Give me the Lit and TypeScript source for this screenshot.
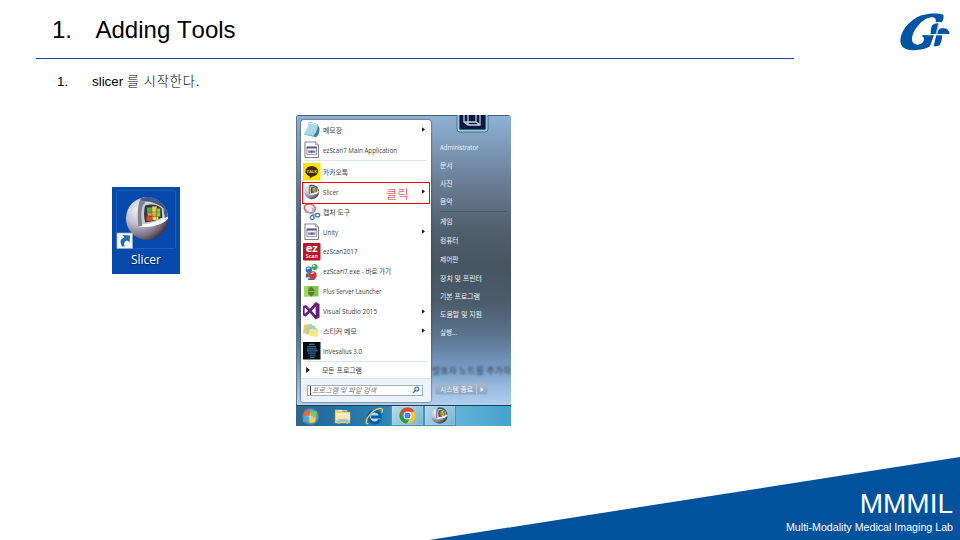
import { LitElement, html, svg, css, nothing } from "lit";
import { customElement } from "lit/decorators.js";

const sphere = (id: string) => svg`
  <defs>
    <radialGradient id="b${id}" cx=".3" cy=".3" r=".82">
      <stop offset="0" stop-color="#f3f2f8"/><stop offset=".4" stop-color="#c3c1d0"/>
      <stop offset=".75" stop-color="#77707f"/><stop offset="1" stop-color="#30262e"/>
    </radialGradient>
    <linearGradient id="r${id}" x1="0" y1="0" x2="0" y2="1">
      <stop offset="0" stop-color="#cfd2dc"/><stop offset="1" stop-color="#ffffff"/>
    </linearGradient>
  </defs>
  <circle cx="22" cy="22" r="21.5" fill="url(#b${id})"/>
  <path d="M15 2C29 -3 43 8 43.5 22C39 28 26 32 13 30C11 19 11 9 15 2Z" fill="url(#r${id})"/>
  <path d="M15 2C29 -3 42 6 43.3 20L40 21.5C40 12 32 4 17 5Z" fill="#41598d"/>
  <path d="M15 2Q11 14 13 30L17 29.5Q16 13 20 6Z" fill="#7d848e"/>
  <path d="M18 8Q30 4 39 12L39 21Q30 27 17 28Q15 16 18 8Z" fill="#c9ccd2"/>
  <path d="M20 9Q30 6 37 12L37.500 21Q30 25 20 26Q18 17 20 9Z" fill="#30373b"/>
  <path d="M22 11h6v7h-6z" fill="#56a96a"/><path d="M27 10h5v8h-5z" fill="#f4d33c"/>
  <path d="M23 17h8v4h-8z" fill="#f09a2c"/><path d="M21.500 19h6v5.500h-6z" fill="#d84c32"/>
  <path d="M31 12h4.500v8.500h-4.500z" fill="#a4bf50"/><path d="M27.500 20h6v3.500h-6z" fill="#f2df58"/>
  <path d="M27 10v14M31.500 11v12M21.500 15.500h14M21.500 20h14" stroke="#4a4a30" stroke-width=".45"/>`;

const appWindow = svg`
  <path d="M2 1h11l3 3v13H2z" fill="#fff" stroke="#777c84"/>
  <path d="M13 1v3h3" fill="#ddd" stroke="#777c84" stroke-width=".7"/>
  <path d="M4 6h10v8H4z" fill="#f5f6fa" stroke="#777" stroke-width=".8"/>
  <path d="M4 6h10v1.6H4z" fill="#55627e"/>
  <path d="M5.3 9.8h2.5v2.4H5.3z" fill="#d54"/><path d="M7.8 9.8h2.4v2.4H7.8z" fill="#2f4cc8"/><path d="M10.2 9.8h2.5v2.4h-2.5z" fill="#638cce"/>`;

const icons: Record<string, unknown> = {
  notepad: svg`<path d="M6 1L15 3Q18 10 16 14L13 17L1 14Q5 10 6 1Z" fill="#6fb4cc"/>
    <path d="M6 1L15 3Q15 10 11 15L1 13Q5 8 6 1Z" fill="#a8d8e5"/>
    <path d="M11 15Q16 10 15 3L17 8Q17 13 13 17Z" fill="#437f9a"/><path d="M5 2l10 2" stroke="#e9f4f6"/>`,
  app: appWindow,
  talk: svg`<path d="M0 0h18v18H0z" fill="#ffe400"/><ellipse cx="9" cy="8.5" rx="6.6" ry="5.4" fill="#3d2c1d"/>
    <path d="M7 12l0 4 4-3z" fill="#3d2c1d"/><text x="9" y="10.2" text-anchor="middle" font-size="4.3" font-weight="700" fill="#f2d800">TALK</text>`,
  slicer: svg`<g transform="translate(1.3 1.5) scale(.35)">${sphere("m")}</g>`,
  snip: svg`<ellipse cx="7" cy="5.5" rx="5.8" ry="4.4" fill="#f8e9ec" stroke="#d25563" stroke-width="1.4" transform="rotate(15 7 5.5)"/>
    <path d="M2 9l11 3M10 5l1 8" stroke="#a5afba" stroke-width="1.7"/>
    <ellipse cx="9.5" cy="15" rx="1.8" ry="2.2" fill="none" stroke="#3e7db3" stroke-width="1.3"/>
    <ellipse cx="15" cy="12.5" rx="2.2" ry="1.8" fill="none" stroke="#3e7db3" stroke-width="1.3"/>`,
  ez: svg`<rect width="18" height="18" rx="1" fill="#bb1728"/><text x="9" y="9" text-anchor="middle" font-size="11.5" font-weight="700" fill="#fff">ez</text>
    <text x="9" y="15.4" text-anchor="middle" font-size="5.5" font-weight="600" fill="#fff">Scan</text>`,
  setup: svg`<circle cx="12" cy="4" r="3.1" fill="#35aa61"/><circle cx="6" cy="7" r="3.3" fill="#3470ad"/>
    <circle cx="10" cy="12.5" r="4" fill="#dd3038"/><path d="M10 2.5l2 1M4 6l3-1M8 11l3-1" stroke="#ecf3f5" stroke-width="1.3"/>
    <path d="M3 11l3-1v5H3zM5 16h7v1.5H5z" fill="#526577"/>`,
  plus: svg`<path d="M1 4h15v11H1z" fill="#86c345"/><path d="M1 4h4v11H1z" fill="#a8d66e"/>
    <path d="M5.5 8l3-3.5 3 3.5v4l-3 3.2-3-3.2z" fill="#5b7a35"/><path d="M5.5 9.8h6" stroke="#96b84e" stroke-width="1"/>`,
  vs: svg`<path fill-rule="evenodd" d="M0 4l3-1 4 4 6-7 4 2v14l-4 2-6-7-4 4-3-1zM1.7 5.6v6.6L5.4 9zM9 9l4 4.5V4.5z" fill="#68217a"/>`,
  sticky: svg`<path d="M1 3l8-1 2 9-8 2z" fill="#b3d989"/><path d="M1 3l4-1-1 9-4 1z" fill="#f1c67d"/>
    <path d="M4 7l7-4 5 6-6 5z" fill="#a2cae3"/><path d="M7 7l9 1-1 8-9-2z" fill="#f4ea87"/>`,
  head: svg`<path d="M0 0h18v18H0z" fill="#080c14"/>
    <path d="M6 2.5h6M4.5 4.8h9M4 7h10M4 9.2h11M5 11.4h8M7 13.6h6M7 15.8h5" stroke="#386f9b" stroke-width="1.2"/>`,
};
const icon = (name: string) => html`<svg class="icon" viewBox="0 0 18 18">${icons[name]}</svg>`;

type Item = { icon: string; label: string; w: number; more?: boolean; rule?: boolean };
const programs: Item[] = [
  { icon: "notepad", label: "메모장", w: 19, more: true },
  { icon: "app", label: "ezScan7 Main Application", w: 74, rule: true },
  { icon: "talk", label: "카카오톡", w: 25 },
  { icon: "slicer", label: "Slicer", w: 15.5, more: true },
  { icon: "snip", label: "캡처 도구", w: 27 },
  { icon: "app", label: "Unity", w: 15, more: true },
  { icon: "ez", label: "ezScan2017", w: 34.5 },
  { icon: "setup", label: "ezScan7.exe - 바로 가기", w: 68 },
  { icon: "plus", label: "Plus Server Launcher", w: 58.5 },
  { icon: "vs", label: "Visual Studio 2015", w: 54, more: true },
  { icon: "sticky", label: "스티커 메모", w: 34, more: true },
  { icon: "head", label: "InVesalius 3.0", w: 39 },
];

const places: { label: string; w: number; rule?: boolean }[] = [
  { label: "Administrator", w: 38.5 },
  { label: "문서", w: 12.5 },
  { label: "사진", w: 12.5 },
  { label: "음악", w: 12.5, rule: true },
  { label: "게임", w: 12.5 },
  { label: "컴퓨터", w: 18.5, rule: true },
  { label: "제어판", w: 18.5 },
  { label: "장치 및 프린터", w: 42 },
  { label: "기본 프로그램", w: 40 },
  { label: "도움말 및 지원", w: 42 },
  { label: "실행...", w: 17 },
];

// Tiny labels are fitted to a fixed width so Latin and Hangul rows keep their rhythm.
const label = (text: string, w: number, cls = "") => html`<svg class="label ${cls}" width=${w} height="12">
  <text x="0" y="8.7" textLength=${w} lengthAdjust="spacingAndGlyphs">${text}</text></svg>`;

@customElement("start-menu")
class StartMenu extends LitElement {
  static styles = css`
    :host { display: flex; flex-direction: column; width: 214.5px; height: 311px; box-sizing: border-box; overflow: hidden; position: relative;
      border-radius: 3px 3px 0 0; font-family: "Open Sans", "Noto Sans CJK KR", sans-serif; font-size: 7.3px; }
    svg { display: block; flex: none; overflow: visible; }
    .body { height: 290px; box-sizing: border-box; display: flex; padding: 4px 0 0 4px; border-top: 1px solid #4c6179; border-left: 1px solid #617488;
      background: linear-gradient(#8fb1d4 0, #7b96b4 35px, #64788e 75px, #515f6d 115px, #465560 150px, #4b5b6b 185px, #5b748f 220px, #7495bc 248px, #98b9de 270px, #b0d0f0 289px); }
    .left { width: 130.5px; height: 282px; border-radius: 3px; overflow: hidden; background: #fff; display: flex; flex-direction: column; box-shadow: 0 0 1px 1px #35435066; }
    .row { height: 19.88px; flex: none; display: flex; align-items: center; padding: 0 6px 0 1.5px; }
    .icon { width: 17.5px; height: 17.5px; margin-right: 2.5px; }
    .label { fill: #3c3c3c; }
    .arrow { margin-left: auto; width: 3px; height: 5px; }
    .rule { height: 1px; margin: 0.6px 4px; flex: none; background: #dde7f4; }
    .all { height: 15px; flex: none; display: flex; align-items: center; padding-left: 5px; gap: 12px; }
    .foot { flex: 1; background: #eef2fa; border-top: 1px solid #dce5f1; display: flex; align-items: center; padding-left: 6px; }
    .search { width: 116px; height: 11.5px; box-sizing: border-box; background: #fff; border: 1px solid #a5afba; display: flex; align-items: center; padding: 0 2px 0 2px; }
    .caret { width: 1px; height: 9px; background: #444; margin-right: 1px; }
    .hint { fill: #777; font-style: italic; }
    .glass { margin-left: auto; width: 8px; height: 8px; }
    .right { flex: 1; padding: 17.6px 0 0 8.5px; display: flex; flex-direction: column; }
    .place { height: 18.25px; flex: none; display: flex; align-items: center; }
    .light { fill: #eff4f9; }
    .line { height: 1px; margin: 0.3px 0; flex: none; background: #4a5966; width: 66px; }
    .ghost { margin: 23px 0 0 -8px; height: 12px; filter: blur(1.1px); }
    .ghost svg { fill: #25394f; font-size: 8.6px; }
    .power { display: flex; margin: 6.5px 0 0 -5px; height: 12px; width: 53px; border: 1px solid #a0b5cb; border-radius: 2px; box-sizing: border-box;
      background: linear-gradient(#a3b6cc, #8ca7c8); align-items: center; padding-left: 4px; }
    .tip { margin-left: 3px; padding-left: 3px; border-left: 1px solid #b4c7da; height: 10px; display: flex; align-items: center; }
    .bar { height: 21px; box-sizing: border-box; border-top: 1px solid #263d4d; display: flex; align-items: center; background: linear-gradient(90deg, #34658a, #246b9d 12%, #2c83b4 42%, #67b5d4 55%, #62b2d6 75%, #46a2cc); }
    .bar svg { width: 19px; height: 19px; }
    .cell { width: 32.5px; height: 20px; display: flex; align-items: center; justify-content: center; box-sizing: border-box; }
    .first { width: 29px; }
    .on { background: linear-gradient(135deg, #b4dbe9, #76b7d3); border: 1px solid #508daf; border-top: 0; box-shadow: inset 0 0 1px #fff; width: 32.5px; }
    .shift { margin-left: 1px; }
    .avatar { position: absolute; left: 160px; top: -10px; width: 33px; height: 28px; }
    .mark { position: absolute; left: 6px; top: 67px; width: 128px; height: 22px; box-sizing: border-box; border: 1px solid #f00; }
    .click { position: absolute; left: 90px; top: 70.5px; font: 300 12px/16px "Noto Sans CJK KR", sans-serif; letter-spacing: .4px; color: #f01010; }
  `;
  render() {
    const arrow = html`<svg class="arrow" viewBox="0 0 3 5"><path d="M0 .3L3 2.5L0 4.7z" fill="#151515"/></svg>`;
    return html`
      <div class="body">
        <div class="left">
          ${programs.map((p) => html`
            <div class="row">${icon(p.icon)}${label(p.label, p.w)}${p.more ? arrow : nothing}</div>
            ${p.rule ? html`<div class="rule"></div>` : nothing}`)}
          <div class="rule"></div>
          <div class="all"><svg width="4" height="6" viewBox="0 0 3 5"><path d="M0 0L3 2.5L0 5z" fill="#111"/></svg>${label("모든 프로그램", 40)}</div>
          <div class="foot"><div class="search"><i class="caret"></i>${label("프로그램 및 파일 검색", 64, "hint")}
            <svg class="glass" viewBox="0 0 8 8"><circle cx="4.8" cy="3" r="2" fill="#e0effb" stroke="#3277b5" stroke-width="1.1"/><path d="M3.3 4.6L1 7" stroke="#3277b5" stroke-width="1.4"/></svg>
          </div></div>
        </div>
        <div class="right">
          ${places.map((p) => html`<div class="place">${label(p.label, p.w, "light")}</div>
            ${p.rule ? html`<div class="line"></div>` : nothing}`)}
          <div class="ghost">${label("발표자 노트를 추가하", 79)}</div>
          <div class="power">${label("시스템 종료", 33, "light")}<span class="tip"><svg width="4" height="5" viewBox="0 0 3 5"><path d="M0 0L3 2.5L0 5z" fill="#eef"/></svg></span></div>
        </div>
      </div>
      <div class="bar">
        <div class="cell first"><svg viewBox="0 0 20 20"><defs><radialGradient id="orb"><stop offset="0" stop-color="#c9e2ec"/><stop offset=".7" stop-color="#5d9dbb"/><stop offset="1" stop-color="#2e6485"/></radialGradient></defs>
          <circle cx="10" cy="10" r="9.8" fill="url(#orb)"/>
          <path d="M3.5 5q3.5-2 6.2-.7L8.9 9.5Q6 8.3 2.8 9.7z" fill="#ec6632"/><path d="M10.7 4.7q3.3 1 6.2-.5l-1 5q-3 1.2-6 .2z" fill="#8dc64b"/>
          <path d="M2.6 10.8q3-1.6 6-.2L7.7 15.8q-2.9-1.2-5.7.1z" fill="#4aa8df"/><path d="M9.7 10.9q3 1 6 0l-1 5q-3 1.4-6 .2z" fill="#fcd040"/></svg></div>
        <div class="cell shift"><svg viewBox="0 0 20 20"><path d="M2 3h7l1 2h8v12H2z" fill="#e8c66b"/><path d="M3 6h15v8H3z" fill="#f8e7ad"/><path d="M5 4h10M5 8h11" stroke="#fff8d8"/><path d="M5 18v-4q0-1 1-1h9q1 0 1 1v4h-2v-3H7v3z" fill="#8ac5df"/></svg></div>
        <div class="cell"><svg viewBox="0 0 20 20"><circle cx="10" cy="10.5" r="6" fill="#a9dcf3"/><path d="M15.6 13.2A6.2 6.2 0 1 1 16.2 10.5H6.5" fill="none" stroke="#0b5aa9" stroke-width="3"/><path d="M3.5 17.5Q-1 18 3 11Q9 2 16 1.5Q20 1.5 17.5 6" fill="none" stroke="#f1cb45" stroke-width="1.4"/></svg></div>
        <div class="cell on"><svg viewBox="0 0 20 20"><circle cx="10" cy="10" r="8.5" fill="#f5c92c"/><path d="M2.6 5.8A8.5 8.5 0 0 1 17.5 6H10L6 12z" fill="#db4437"/><path d="M2.6 5.8A8.5 8.5 0 0 0 9.3 18.5L13 12H6z" fill="#279b57"/><circle cx="10" cy="10" r="4.2" fill="#fff"/><circle cx="10" cy="10" r="3.2" fill="#4285e8"/></svg></div>
        <div class="cell on"><svg viewBox="-3 -3 50 50">${sphere("t")}</svg></div>
      </div>
      <svg class="avatar" viewBox="0 0 33 28"><rect x="1" y="0" width="31" height="27" rx="3" fill="#bed4df" stroke="#4a687d"/><rect x="3" y="1" width="27" height="24" rx="1" fill="#071943" stroke="#62b9c6"/>
        <path d="M8 4h12v13H8zM12 7h12v13H12zM8 17l4 3M20 17l4 3" fill="none" stroke="#c5cedd" stroke-width="1.3"/></svg>
      <div class="mark"></div><div class="click">클릭</div>`;
  }
}

@customElement("app-root")
class AppRoot extends LitElement {
  static styles = css`
    :host { display: flex; flex-direction: column; position: relative; width: 960px; height: 540px; overflow: hidden; background: #fff; color: #000;
      font-family: "Liberation Sans", "Noto Sans CJK KR", sans-serif; }
    header { height: 58px; box-sizing: border-box; display: flex; padding: 13px 10px 0 52px; }
    h1 { margin: 3px 0 0; font-weight: 400; font-size: 24px; line-height: 28px; display: flex; font-kerning: none; }
    h1 span { width: 43.5px; }
    .logo { margin-left: auto; width: 50px; height: 37.6px; }
    hr { margin: 0 0 0 35.5px; width: 758px; height: 1px; border: 0; background: #00529c; flex: none; }
    .step { display: flex; margin: 15px 0 0 57px; height: 16px; font-size: 13.33px; line-height: 16px; white-space: pre; }
    .step b { font-weight: 400; width: 35px; }
    .ko { font: 300 13.2px/14px "Noto Sans CJK KR", sans-serif; letter-spacing: .9px; }
    .shots { display: flex; margin: 25px 0 0 112px; align-items: flex-start; gap: 116px; }
    .desk { width: 68px; height: 87px; margin-top: 72px; box-sizing: border-box; background: #0549ad; display: flex; flex-direction: column; align-items: center; }
    .tile { width: 68px; height: 64px; display: block; }
    .name { font: 12px/17px "Open Sans", sans-serif; color: #fff; text-shadow: 0 1px 2px #001a48; }
    footer { position: absolute; right: 0; bottom: 0; width: 531px; height: 83px; background: #00529c; clip-path: polygon(0 100%, 100% 0, 100% 100%); color: #fff; text-align: right; box-sizing: border-box; padding: 31px 7px 0 0; }
    .lab { font-size: 28px; line-height: 32px; }
    .sub { font-size: 10.67px; line-height: 13px; margin-top: 1px; }
  `;
  render() {
    return html`
      <header>
        <h1><span>1.</span>Adding Tools</h1>
        <svg class="logo" viewBox="361 38 150 113" fill="#0055a2">
          <path d="M491 43C472 37 431 38 405 55C375 75 362 100 362 123C363 142 380 151 403 150C425 149 441 145 451 138L463 105L429 104L427 108Q434 111 433 117C431 133 413 137 403 130C390 120 399 94 417 74C431 57 452 47 464 52Q471 56 468 65L486 66Q494 54 491 43Z"/>
          <path d="M458 75Q466 67 478 69L471 101L453 101Q453 83 458 75Z"/>
          <path d="M473 101Q475 84 487 84Q508 82 510 101Z"/>
          <path d="M469 105L488 105Q486 128 479 136Q469 140 461 137Z"/>
          <path d="M478 64L460 141M426 103H511" stroke="#fff" stroke-width="2"/>
        </svg>
      </header>
      <hr />
      <div class="step"><b>1.</b>slicer <span class="ko">를 시작한다</span>.</div>
      <div class="shots">
        <div class="desk">
          <svg class="tile" viewBox="0 0 68 64">
            <rect x="4.5" y="3.5" width="59" height="58" rx="1" fill="none" stroke="#1f5fba"/>
            <g transform="translate(13.5 9.5) scale(.98 1)">${sphere("d")}</g>
            <rect x="5" y="46" width="15.5" height="15.5" fill="#f4f7fa" stroke="#9fabbb" stroke-width=".7"/>
            <path d="M10 59.5Q6 52 12.5 50.5L10.5 48L18 48.5L17.5 55.5L15.5 53.5Q11 54 12.5 59.5Z" fill="#256baa"/>
          </svg>
          <div class="name">Slicer</div>
        </div>
        <start-menu></start-menu>
      </div>
      <footer><div class="lab">MMMIL</div><div class="sub">Multi-Modality Medical Imaging Lab</div></footer>`;
  }
}
